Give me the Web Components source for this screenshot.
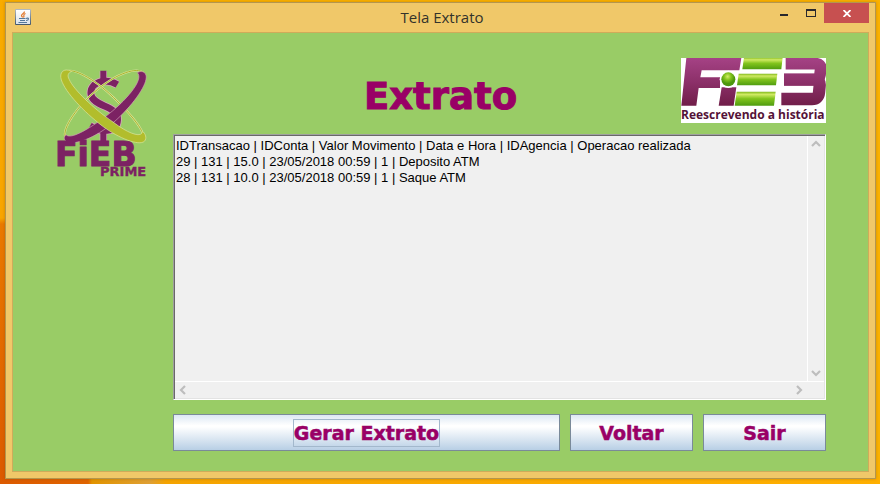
<!DOCTYPE html>
<html lang="pt-BR">
<head>
<meta charset="utf-8">
<title>Tela Extrato</title>
<style>
html, body { height: 100%; margin: 0; }
body {
  box-sizing: border-box;
  padding: 2px 4px 5px 5px;
  background:
    linear-gradient(to bottom, #f9ac00 0, #f9a500 218px, #ea7a00 224px, #dc5a00 100%) left / 6px 100% no-repeat,
    linear-gradient(to right, #dc5a00 0, #e06400 88px, #e29400 92px, #dfa035 150px, #f5a400 166px, #ffb000 100%) bottom / 100% 6px no-repeat,
    #fbb200;
  font-family: "Liberation Sans", Arial, sans-serif;
}
</style>
</head>
<body>
<app-window caption="Tela Extrato">
  <prime-logo slot="brand"></prime-logo>
  <screen-title slot="title">Extrato</screen-title>
  <fieb-logo slot="logo"></fieb-logo>
  <statement-area slot="content"></statement-area>
  <action-bar slot="actions">
    <action-button focused>Gerar Extrato</action-button>
    <action-button>Voltar</action-button>
    <action-button>Sair</action-button>
  </action-bar>
</app-window>
<script>
function define(name, html, setup) {
  const template = document.createElement('template');
  template.innerHTML = html;
  customElements.define(name, class extends HTMLElement {
    constructor() {
      super();
      this.attachShadow({ mode: 'open' }).append(template.content.cloneNode(true));
    }
    connectedCallback() { if (setup) setup(this, this.shadowRoot); }
  });
}

define('java-icon', `
<style>:host { display: block; width: 16px; height: 16px; } svg { display: block; }</style>
<svg width="16" height="16" viewBox="0 0 16 16" aria-hidden="true">
  <defs>
    <linearGradient id="e" x2="0" y2="1"><stop stop-color="#b4bcc4"/><stop offset="1" stop-color="#41566c"/></linearGradient>
    <linearGradient id="f" x2="0" y2="1"><stop stop-color="#fff"/><stop offset="1" stop-color="#dce3ea"/></linearGradient>
  </defs>
  <rect width="16" height="16" rx="1" fill="url(#e)"/>
  <rect x="1" y="1" width="14" height="14" fill="url(#f)"/>
  <path d="M9.500 2.500C9.500 4.500 6.500 5 6.500 6.500C6.500 7.500 7.500 7.500 7.500 8.500M10.500 4.500C8.500 5.500 8.500 6 9 7L8.500 8.500" fill="none" stroke="#e27a2e" stroke-width="1.200"/>
  <path d="M4 9.500H10.500M5 11.500H10M11 9.500C14.500 8 14 11.500 11 11.500M3.500 13.500H12" fill="none" stroke="#54799c" stroke-width="1.200"/>
</svg>`);

define('window-controls', `
<style>
:host { display: flex; align-self: flex-start; }
button { border: 0; padding: 0; margin: 0; background: none; width: 27px; height: 20px; display: grid; place-items: center; }
button.close { width: 45px; background: #c75050; }
svg { display: block; }
</style>
<button aria-label="Minimizar"><svg width="10" height="10" viewBox="0 0 10 10"><rect x="1" y="6" width="8" height="2" fill="#28282c"/></svg></button>
<button aria-label="Maximizar"><svg width="10" height="8" viewBox="0 0 10 8"><path d="M0 0H10V8H0ZM1 2V7H9V2Z" fill="#28282c" fill-rule="evenodd"/></svg></button>
<button class="close" aria-label="Fechar"><svg width="8" height="7" viewBox="0 0 8 7"><path d="M0.500 0L7.500 7M7.500 0L0.500 7" stroke="#fff" stroke-width="1.800"/></svg></button>`);

define('app-window', `
<style>
:host { display: flex; flex-direction: column; box-sizing: border-box; height: 100%; background: #f0c869; border: 1px solid #b3964f; padding: 0 6px 6px; box-shadow: 0 0 3px rgba(120, 70, 0, .35); }
header { display: grid; grid-template-columns: 1fr auto 1fr; align-items: center; height: 29px; padding-left: 3px; }
java-icon { align-self: start; margin-top: 6px; }
h2 { margin: 0; padding-bottom: 2px; font: 15px/20px "Open Sans", "Noto Sans", sans-serif; color: #33332b; }
window-controls { justify-self: end; }
main { flex: 1; min-height: 0; box-sizing: border-box; border: 1px solid #cfab5a; background: #99cc66; display: grid; grid-template-columns: 160px minmax(0, 1fr) 160px; grid-template-rows: 101px minmax(0, 1fr) auto; padding-bottom: 20px; }
.brand { grid-area: 1 / 1 / 3 / 2; padding: 36px 0 0 44px; }
.title { grid-area: 1 / 2; justify-self: center; align-self: center; padding-top: 26px; }
.logo { grid-area: 1 / 3; justify-self: end; padding: 25px 42px 0 0; }
.content { grid-area: 2 / 2 / 3 / 4; margin-right: 42px; }
.actions { grid-area: 3 / 2 / 4 / 4; margin: 14px 42px 0 0; }
</style>
<header><java-icon></java-icon><h2></h2><window-controls></window-controls></header>
<main>
  <div class="brand"><slot name="brand"></slot></div>
  <div class="title"><slot name="title"></slot></div>
  <div class="logo"><slot name="logo"></slot></div>
  <div class="content"><slot name="content"></slot></div>
  <div class="actions"><slot name="actions"></slot></div>
</main>`, (host, root) => { root.querySelector('h2').textContent = host.getAttribute('caption'); });

define('screen-title', `
<style>
:host { display: block; color: #990066; }
h1 { margin: 0; font: bold 37px/40px "DejaVu Sans", sans-serif; -webkit-text-stroke: 1px currentColor; }
</style><h1><slot></slot></h1>`);

define('prime-logo', `
<style>:host { display: block; } svg { display: block; overflow: visible; } text { font-family: "DejaVu Sans", sans-serif; font-weight: bold; fill: #7c2263; stroke: #7c2263; }</style>
<svg width="94" height="108" viewBox="21 27 282 324" role="img" aria-label="FiEB Prime">
  <g fill="none">
    <path d="M160 34V62M160 212V248" stroke="#d5a9bb" stroke-width="22"/>
    <path d="M202 74C165 52 117 68 123 104C130 142 205 135 203 180C200 222 150 215 120 198" stroke="#d5a9bb" stroke-width="25"/>
    <path d="M160 32V62M160 208V248" stroke="#7c2263" stroke-width="18"/>
    <path d="M202 74C165 52 117 68 123 104C130 142 205 135 203 180C200 222 150 215 120 198" stroke="#7c2263" stroke-width="20"/>
    <path d="M46 232C36 205 82 137 143 88C201 40 261 20 280 38" stroke="#d8e29b" stroke-width="6"/>
    <path d="M46 232C36 205 82 137 143 88C201 40 261 20 280 38" stroke="#aab72b" stroke-width="3"/>
    <path d="M45 36C65 20 132 55 190 112C246 166 291 220 278 239" stroke="#d8e29b" stroke-width="6"/>
    <path d="M45 36C65 20 132 55 190 112C246 166 291 220 278 239" stroke="#aab72b" stroke-width="3"/>
  </g>
  <path d="M262 38C276 29 293 38 288 58C283 88 237 150 180 196C124 240 62 260 45 241C41 236 42 230 48 224C60 239 110 212 166 170C226 125 284 58 262 38Z" fill="#7c2263" stroke="#cfa0b4" stroke-width="2"/>
  <path d="M65 34C40 22 27 38 34 60C47 98 100 154 157 198C208 236 267 258 283 244C292 235 286 220 277 213C278 234 240 225 189 186C129 145 70 87 58 59C51 47 54 39 65 34Z" fill="#b2bd2c" stroke="#dde59f" stroke-width="2"/>
  <text x="15" y="317" font-size="99" stroke-width="3">FiEB</text>
  <text x="150" y="349" font-size="39" stroke-width="1">PRIME</text>
</svg>`);

define('fieb-logo', `
<style>
:host { display: block; width: 145px; background: #fff; }
svg { display: block; }
p { margin: 0; font: bold 12px/17px "Open Sans", "Noto Sans", sans-serif; color: #541238; white-space: nowrap; }
</style>
<svg width="145" height="48" viewBox="33 24 435 144" role="img" aria-label="FiEB">
  <defs>
    <linearGradient id="p" gradientUnits="userSpaceOnUse" x1="0" y1="24" x2="0" y2="168"><stop stop-color="#a54285"/><stop offset=".5" stop-color="#8c3069"/><stop offset="1" stop-color="#701d48"/></linearGradient>
    <linearGradient id="g" x2="0" y2="1"><stop stop-color="#7fb81a"/><stop offset=".2" stop-color="#d0ea64"/><stop offset=".5" stop-color="#82c41d"/><stop offset="1" stop-color="#4f9c10"/></linearGradient>
    <radialGradient id="b" cx=".45" cy=".3"><stop stop-color="#d2ed68"/><stop offset=".5" stop-color="#82c41d"/><stop offset="1" stop-color="#4d980e"/></radialGradient>
  </defs>
  <path d="M49 24H214L208 61H95L91 82H150V114H86L79 167H34Z" fill="url(#p)"/>
  <path d="M155 112H199L191 167H146Z" fill="url(#p)"/>
  <circle cx="175" cy="88" r="26" fill="#fff"/>
  <circle cx="175" cy="88" r="21" fill="url(#b)"/>
  <path d="M222 22H338L334 58H217Z" fill="url(#g)"/>
  <path d="M206 71H322L318 106H201Z" fill="url(#g)"/>
  <path d="M200 125H317L312 167H194Z" fill="url(#g)"/>
  <g fill="none" stroke="url(#p)">
    <path d="M347 41H436Q454 41 452 57L450 75Q448 89 434 89H342" stroke-width="35"/>
    <path d="M342 89H434Q451 91 449 108L447 128Q445 147 426 147H334" stroke-width="37"/>
  </g>
</svg>
<p>Reescrevendo a história</p>`);

define('scroll-arrow', `
<style>
:host { display: block; }
button { display: grid; place-items: center; width: 16px; height: 16px; border: 0; padding: 0; background: none; }
:host([dir-to="up"]) svg { rotate: 180deg; }
:host([dir-to="left"]) svg { rotate: 90deg; }
:host([dir-to="right"]) svg { rotate: 270deg; }
</style>
<button><svg width="10" height="10" viewBox="0 0 10 10"><path d="M1 3L5 7L9 3" fill="none" stroke="#bdbdbd" stroke-width="2.200"/></svg></button>`,
(host, root) => root.querySelector('button').setAttribute('aria-label', host.getAttribute('label')));

define('statement-area', `
<style>
:host { display: grid; box-sizing: border-box; height: 100%; grid-template-columns: minmax(0, 1fr) 17px; grid-template-rows: minmax(0, 1fr) 17px; background: #f0f0f0; border: 1px solid; border-color: #a0a0a0 #fff #fff #a0a0a0; box-shadow: inset 1px 1px #696969, inset -1px -1px #e3e3e3; padding: 1px; }
textarea { resize: none; overflow: hidden; margin: 0; border: 0; outline: 0; padding: 2px 1px; background: none; color: #000; font: 13px/16px "Liberation Sans", Arial, sans-serif; white-space: pre; }
.v, .h { display: flex; justify-content: space-between; }
.v { flex-direction: column; border-left: 1px solid #fff; }
.h { border-top: 1px solid #fff; grid-column: 1 / 3; padding-right: 17px; }
</style>
<textarea readonly aria-label="Extrato">IDTransacao | IDConta | Valor Movimento | Data e Hora | IDAgencia | Operacao realizada
29 | 131 | 15.0 | 23/05/2018 00:59 | 1 | Deposito ATM
28 | 131 | 10.0 | 23/05/2018 00:59 | 1 | Saque ATM</textarea>
<div class="v"><scroll-arrow dir-to="up" label="Rolar para cima"></scroll-arrow><scroll-arrow dir-to="down" label="Rolar para baixo"></scroll-arrow></div>
<div class="h"><scroll-arrow dir-to="left" label="Rolar para a esquerda"></scroll-arrow><scroll-arrow dir-to="right" label="Rolar para a direita"></scroll-arrow></div>`);

define('action-bar', `
<style>:host { display: grid; grid-template-columns: minmax(0, 1fr) 123px 123px; gap: 10px; }</style><slot></slot>`);

define('action-button', `
<style>
:host { display: block; }
button { display: grid; place-items: center; box-sizing: border-box; width: 100%; height: 37px; padding: 0; border: 1px solid #7a8a99; background: linear-gradient(#dde8f3, #fff 30%, #fff 34%, #b8cfe5); color: #990066; font: bold 19px/26px "DejaVu Sans", sans-serif; }
span { border: 1px solid transparent; -webkit-text-stroke: 0.500px currentColor; }
:host([focused]) span { border-color: #a3b8cc; }
</style>
<button><span><slot></slot></span></button>`);
</script>
</body>
</html>
